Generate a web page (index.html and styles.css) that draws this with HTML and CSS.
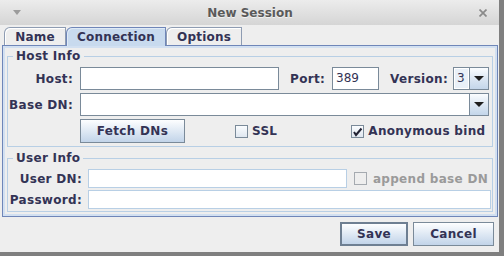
FILE: index.html
```html
<!DOCTYPE html>
<html lang="en">
<head>
    <meta charset="UTF-8">
    <title>New Session</title>
    <link rel="stylesheet" href="styles.css">
</head>
<body>
    <div class="window">
        <div class="titlebar">
            <span class="menu-arrow"></span>
            <span class="title">New Session</span>
            <svg class="close" width="8" height="8" viewBox="0 0 8 8"><path d="M0.5 0.5 L7.5 7.5 M7.5 0.5 L0.5 7.5" stroke="#8a8a8a" stroke-width="1.7"/></svg>
        </div>

        <div class="tabs">
            <div class="tab tab-name">Name</div>
            <div class="tab tab-conn active">Connection</div>
            <div class="tab tab-opts">Options</div>
        </div>

        <div class="tab-panel">
            <fieldset class="group">
                <legend>Host Info</legend>
                <div class="host-grid">
                    <label class="label">Host:</label>
                    <div class="inline">
                        <div class="field host-field"></div>
                        <label class="port-label">Port:</label>
                        <div class="field port-field">389</div>
                        <label class="version-label">Version:</label>
                        <div class="combo version-combo">
                            <div class="combo-value">3</div>
                            <div class="combo-btn"><span class="tri"></span></div>
                        </div>
                    </div>

                    <label class="label">Base DN:</label>
                    <div class="combo">
                        <div class="combo-value"></div>
                        <div class="combo-btn"><span class="tri"></span></div>
                    </div>

                    <span></span>
                    <div class="inline">
                        <button class="btn fetch">Fetch DNs</button>
                        <span class="check ssl"><span class="box"></span>SSL</span>
                        <span class="check anon">
                            <span class="box"><svg width="11" height="11" viewBox="0 0 11 11"><path d="M2 6 L4 9 L9.5 2.5" fill="none" stroke="#222233" stroke-width="2"/></svg></span>
                            Anonymous bind
                        </span>
                    </div>
                </div>
            </fieldset>

            <fieldset class="group user">
                <legend>User Info</legend>
                <div class="user-grid">
                    <label class="label">User DN:</label>
                    <div class="inline user-row">
                        <div class="field light user-field"></div>
                        <span class="check disabled"><span class="box"></span>append base DN</span>
                    </div>

                    <label class="label">Password:</label>
                    <div class="field light"></div>
                </div>
            </fieldset>
        </div>

        <div class="actions">
            <button class="btn save">Save</button>
            <button class="btn cancel">Cancel</button>
        </div>
    </div>
</body>
</html>
```

FILE: styles.css
```css
* {
    box-sizing: border-box;
}

html, body {
    margin: 0;
    padding: 0;
}

body {
    width: 504px;
    height: 256px;
    overflow: hidden;
    background: #7f7f7f;
    font-family: "DejaVu Sans", sans-serif;
    font-size: 12px;
    font-weight: bold;
    letter-spacing: 0.3px;
    color: #333355;
}

.window {
    width: 499px;
    height: 252px;
    background: #eeeeee;
    display: flex;
    flex-direction: column;
}

/* title bar */
.titlebar {
    height: 25px;
    flex: none;
    background: linear-gradient(#ececec, #d5d5d5);
    display: grid;
    grid-template-columns: 1fr auto 1fr;
    align-items: center;
    padding: 0 12px 0 13px;
}

.menu-arrow {
    width: 0;
    height: 0;
    border-left: 4px solid transparent;
    border-right: 4px solid transparent;
    border-top: 5px solid #9c9c9c;
}

.title {
    color: #5a5a5a;
    letter-spacing: 0;
    text-shadow: 0 1px 0 #f2f2f2;
}

.close {
    justify-self: end;
}

/* tabs */
.tabs {
    display: flex;
    height: 19px;
    margin-top: 2px;
    margin-bottom: -1px;
    padding-left: 4px;
}

.tab {
    height: 19px;
    border: 1px solid #8e9cb2;
    border-bottom: none;
    border-top-left-radius: 6px;
    background: #eeeeee;
    box-shadow: inset 1px 1px 0 #ffffff;
    text-align: center;
    line-height: 18px;
    letter-spacing: 0.2px;
}

.tab-name { width: 62px; }
.tab-conn { width: 100px; }
.tab-opts { width: 76px; }

.tab.active {
    position: relative;
    z-index: 1;
    background: #c8daee;
    border-color: #6f86b8;
    box-shadow: inset 1px 1px 0 #dfeaf6;
}

.tab-panel {
    height: 172px;
    margin: 0 1px 0 2px;
    border: 1px solid #6f86b8;
    box-shadow: inset 0 0 0 2px #d2e0f1;
    padding: 3px 4px 0 4px;
}

/* group boxes */
.group {
    margin: 0;
    padding: 0;
    min-width: 0;
    border: 1px solid #b8cfe5;
}

.group legend {
    margin-left: 5px;
    padding: 0 3px;
    line-height: 14px;
}

.group.user {
    margin-top: 4px;
}

.host-grid {
    display: grid;
    grid-template-columns: 65px 1fr;
    grid-auto-rows: 23px 23px 24px;
    column-gap: 7px;
    row-gap: 3px;
    align-items: center;
    padding: 4px 3px 3px 0;
}

.user-grid {
    display: grid;
    grid-template-columns: 74px 1fr;
    grid-auto-rows: 19px;
    column-gap: 6px;
    row-gap: 2px;
    align-items: center;
    padding: 4px 1px 2px 0;
}

.label {
    text-align: right;
}

.inline {
    display: flex;
    align-items: center;
    height: 100%;
}

/* fields */
.field {
    height: 23px;
    border: 1px solid #7a8a99;
    background: #ffffff;
    padding: 0 3px;
    font-weight: normal;
    letter-spacing: 0;
    line-height: 21px;
}

.field.light {
    height: 19px;
    border-color: #b8cfe5;
}

.host-field {
    flex: 1;
    margin-right: 11px;
}

.port-label {
    margin-right: 7px;
}

.port-field {
    width: 47px;
}

.version-label {
    margin-left: 11px;
    margin-right: 5px;
}

.combo {
    display: flex;
    height: 23px;
    border: 1px solid #7a8a99;
    background: #ffffff;
}

.combo-value {
    flex: 1;
    padding-left: 2px;
    font-weight: normal;
    letter-spacing: 0;
    line-height: 21px;
}

.version-combo {
    width: 36px;
}

.version-combo .combo-value {
    background: #e9f0f8;
    border: 1px solid #ffffff;
    line-height: 19px;
}

.combo-btn {
    width: 19px;
    border-left: 1px solid #7a8a99;
    background: linear-gradient(#fbfdff, #dce7f3 50%, #c4d6ea);
    display: flex;
    align-items: center;
    justify-content: center;
}

.tri {
    width: 0;
    height: 0;
    border-left: 5px solid transparent;
    border-right: 5px solid transparent;
    border-top: 5px solid #1e1e1e;
}

/* buttons */
.btn {
    height: 24px;
    padding: 0;
    border: 1px solid #7a8a99;
    background: linear-gradient(#fdfeff, #e2ebf5 45%, #c2d4e9);
    font: inherit;
    letter-spacing: 0.3px;
    color: #333355;
}

.fetch {
    width: 105px;
}

.save {
    width: 68px;
    border: 2px solid #6e7f92;
}

.cancel {
    width: 81px;
}

/* checkboxes */
.check {
    display: flex;
    align-items: center;
    gap: 5px;
}

.box {
    width: 13px;
    height: 13px;
    border: 1px solid #7a8a99;
    background: linear-gradient(#fafcfe, #dfe7f0);
    display: flex;
    align-items: center;
    justify-content: center;
}

.ssl {
    margin-left: 50px;
    gap: 4px;
}

.anon {
    margin-left: 74px;
    gap: 4px;
}

.check.disabled {
    color: #9a9a9a;
    margin-left: 7px;
    gap: 6px;
}

.check.disabled .box {
    border-color: #a5aab0;
    background: #eeeeee;
}

.user-row {
    padding-right: 3px;
}

.user-field {
    flex: 1;
}

/* dialog buttons */
.actions {
    display: flex;
    justify-content: flex-end;
    gap: 5px;
    padding: 5px 5px 0 0;
}
```
